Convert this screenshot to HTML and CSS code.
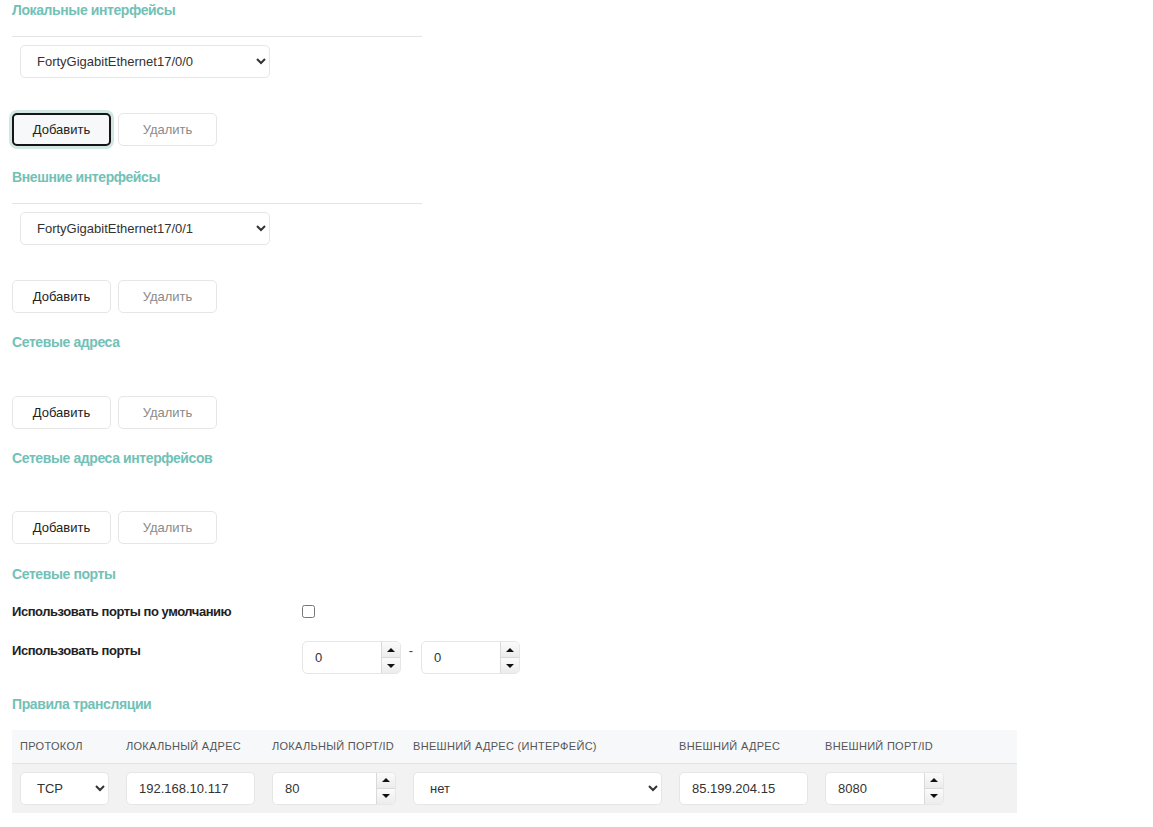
FILE: index.html
```html
<!DOCTYPE html>
<html lang="ru">
<head>
<meta charset="utf-8">
<title>NAT</title>
<link rel="stylesheet" href="styles.css">
</head>
<body>
<main class="page">

  <section class="block block-local">
    <h3 class="block-title">Локальные интерфейсы</h3>
    <div class="iface-list">
      <select class="ctl select iface-select">
        <option>FortyGigabitEthernet17/0/0</option>
      </select>
    </div>
    <div class="actions">
      <button class="btn btn-focus">Добавить</button>
      <button class="btn" disabled>Удалить</button>
    </div>
  </section>

  <section class="block block-external">
    <h3 class="block-title">Внешние интерфейсы</h3>
    <div class="iface-list">
      <select class="ctl select iface-select">
        <option>FortyGigabitEthernet17/0/1</option>
      </select>
    </div>
    <div class="actions">
      <button class="btn">Добавить</button>
      <button class="btn" disabled>Удалить</button>
    </div>
  </section>

  <section class="block block-addr">
    <h3 class="block-title">Сетевые адреса</h3>
    <div class="empty-list"></div>
    <div class="actions">
      <button class="btn">Добавить</button>
      <button class="btn" disabled>Удалить</button>
    </div>
  </section>

  <section class="block block-ifaddr">
    <h3 class="block-title">Сетевые адреса интерфейсов</h3>
    <div class="empty-list short"></div>
    <div class="actions">
      <button class="btn">Добавить</button>
      <button class="btn" disabled>Удалить</button>
    </div>
  </section>

  <section class="block">
    <h3 class="block-title">Сетевые порты</h3>
    <div class="form-row row-check">
      <label class="form-label">Использовать порты по умолчанию</label>
      <input type="checkbox" class="check">
    </div>
    <div class="form-row row-ports">
      <label class="form-label">Использовать порты</label>
      <div class="range">
        <div class="num w99">
          <input type="number" value="0">
          <span class="spin"><span class="up"></span><span class="down"></span></span>
        </div>
        <span class="dash">-</span>
        <div class="num w99">
          <input type="number" value="0">
          <span class="spin"><span class="up"></span><span class="down"></span></span>
        </div>
      </div>
    </div>
  </section>

  <section class="block">
    <h3 class="block-title">Правила трансляции</h3>
    <table class="rules">
      <colgroup>
        <col class="c-proto"><col class="c-laddr"><col class="c-lport">
        <col class="c-eif"><col class="c-eaddr"><col class="c-eport">
      </colgroup>
      <thead>
        <tr>
          <th>Протокол</th>
          <th>Локальный адрес</th>
          <th>Локальный порт/ID</th>
          <th>Внешний адрес (интерфейс)</th>
          <th>Внешний адрес</th>
          <th>Внешний порт/ID</th>
        </tr>
      </thead>
      <tbody>
        <tr>
          <td>
            <select class="ctl select sel-proto"><option>TCP</option></select>
          </td>
          <td><input class="ctl text w129" type="text" value="192.168.10.117"></td>
          <td>
            <div class="num w124">
              <input type="number" value="80">
              <span class="spin"><span class="up"></span><span class="down"></span></span>
            </div>
          </td>
          <td>
            <select class="ctl select sel-eif"><option>нет</option></select>
          </td>
          <td><input class="ctl text w129" type="text" value="85.199.204.15"></td>
          <td>
            <div class="num w119">
              <input type="number" value="8080">
              <span class="spin"><span class="up"></span><span class="down"></span></span>
            </div>
          </td>
        </tr>
      </tbody>
    </table>
  </section>

</main>
</body>
</html>
```

FILE: styles.css
```css
* {
  box-sizing: border-box;
}

html, body {
  margin: 0;
  background: #fff;
}

body {
  font-family: "Liberation Sans", Arial, sans-serif;
  font-size: 13px;
  color: #222;
}

.page {
  padding: 0 12px;
}

.block-title {
  margin: 0;
  font-size: 14px;
  line-height: 20px;
  font-weight: bold;
  letter-spacing: -0.4px;
  color: #72c1b6;
}

.block {
  margin-bottom: 20px;
}

.block-local {
  margin-bottom: 21px;
}

.block-external,
.block-addr {
  margin-bottom: 19px;
}

/* list of chosen interfaces, separated from the title by a rule */
.iface-list {
  width: 410px;
  margin-top: 16px;
  border-top: 1px solid #e4e4e4;
  padding: 8px 0 0 8px;
  height: 77px;
}

.empty-list {
  height: 44px;
}

.empty-list.short {
  height: 43px;
}

.actions {
  display: flex;
  gap: 7px;
}

.btn {
  width: 99px;
  height: 33px;
  border: 1px solid #e6e6e6;
  border-radius: 5px;
  background: #fff;
  font-family: inherit;
  font-size: 13px;
  color: #222;
  padding: 0;
}

.btn:disabled {
  color: #8a8a8a;
}

.btn-focus {
  border: 2px solid #151515;
  background: #f6f8fa;
  box-shadow: 0 0 0 3px #d2e7e4;
}

/* form controls */
.ctl {
  height: 33px;
  border: 1px solid #e6e6e6;
  border-radius: 5px;
  background: #fff;
  font-family: inherit;
  font-size: 13px;
  color: #333;
  outline: none;
}

.select {
  padding: 0 8px 0 12px;
}

.iface-select {
  width: 250px;
}

.text {
  padding: 0 12px;
}

.w129 { width: 129px; }
.sel-proto { width: 89px; }
.sel-eif { width: 249px; }

/* number field with stepper buttons */
.num {
  display: flex;
  height: 33px;
  border: 1px solid #e6e6e6;
  border-radius: 5px;
  background: #fff;
  overflow: hidden;
}

.w99 { width: 99px; }
.w124 { width: 124px; }
.w119 { width: 119px; }

.num input {
  flex: 1;
  min-width: 0;
  border: 0;
  outline: none;
  padding: 0 0 0 12px;
  font-family: inherit;
  font-size: 13px;
  color: #333;
  background: transparent;
  -moz-appearance: textfield;
}

.num input::-webkit-inner-spin-button,
.num input::-webkit-outer-spin-button {
  -webkit-appearance: none;
  margin: 0;
}

.spin {
  width: 19px;
  display: flex;
  flex-direction: column;
  border-left: 1px solid #d9d9d9;
}

.spin .up,
.spin .down {
  flex: 1;
  display: flex;
  align-items: center;
  justify-content: center;
  background: linear-gradient(#fbfbfb, #ececec);
}

.spin .up {
  border-bottom: 1px solid #d9d9d9;
}

.spin .up::before,
.spin .down::before {
  content: "";
  width: 0;
  height: 0;
  border-left: 4px solid transparent;
  border-right: 4px solid transparent;
}

.spin .up::before {
  border-bottom: 4px solid #111;
}

.spin .down::before {
  border-top: 4px solid #111;
}

/* ports form */
.form-row {
  display: flex;
}

.form-label {
  width: 290px;
  font-weight: bold;
  font-size: 13px;
  letter-spacing: -0.45px;
  color: #222;
}

.row-check {
  margin-top: 17px;
  align-items: center;
  height: 20px;
}

.check {
  margin: 0;
  width: 13px;
  height: 13px;
}

.row-ports {
  margin-top: 20px;
}

.row-ports .form-label {
  line-height: 20px;
}

.range {
  display: flex;
  align-items: flex-start;
}

.dash {
  width: 20px;
  text-align: center;
  line-height: 20px;
  color: #444;
}

/* translation rules table */
.rules {
  margin-top: 16px;
  width: 1005px;
  border-collapse: collapse;
  table-layout: fixed;
}

.c-proto { width: 106px; }
.c-laddr { width: 146px; }
.c-lport { width: 141px; }
.c-eif { width: 266px; }
.c-eaddr { width: 146px; }
.c-eport { width: 200px; }

.rules th {
  height: 33px;
  padding: 0 8px;
  text-align: left;
  font-weight: normal;
  font-size: 11px;
  letter-spacing: 0.3px;
  text-transform: uppercase;
  color: #555;
  background: #f7f8fa;
  border-bottom: 1px solid #e4e4e4;
  white-space: nowrap;
}

.rules td {
  padding: 8px;
  background: #f2f2f2;
  vertical-align: middle;
}
```
